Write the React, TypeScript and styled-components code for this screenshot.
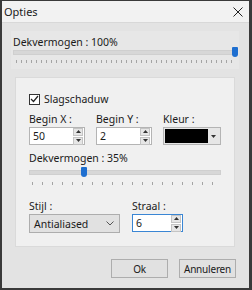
import { FC } from 'react';
import styled, { createGlobalStyle } from 'styled-components';

const GlobalStyle = createGlobalStyle`
  html, body {
    margin: 0;
    padding: 0;
    background: #3c3c3c;
  }
  body {
    font-family: "Noto Sans", "Open Sans", sans-serif;
    font-size: 10.5px;
    color: #1a1a1a;
  }
`;

const Frame = styled.div`
  width: 252px;
  height: 290px;
  box-sizing: border-box;
  padding: 1px 3px 2px 2px;
  background: #3a3a3a;
`;

const Window = styled.div`
  height: 100%;
  display: flex;
  flex-direction: column;
  background: #e3e3e3;
`;

const TitleBar = styled.div`
  height: 21px;
  display: flex;
  align-items: center;
  justify-content: space-between;
  padding: 0 6px 0 2px;
  background: #f2f2f2;
  border-bottom: 1px solid #d8d8d8;
  font-size: 11px;
`;

const Body = styled.div`
  flex: 1;
  display: flex;
  flex-direction: column;
  padding: 8px 10px 0 9px;
`;

const TopPanel = styled.div`
  display: flex;
  flex-direction: column;
  padding: 4px 0 0 2px;
  background: #e7e7e7;
`;

const Label = styled.div<{ $top?: number }>`
  line-height: 14px;
  white-space: nowrap;
  margin-top: ${p => p.$top ?? 0}px;
`;

const SliderWrap = styled.div<{ $width: number; $top: number }>`
  position: relative;
  width: ${p => p.$width}px;
  height: 20px;
  margin-top: ${p => p.$top}px;
`;

const Track = styled.div`
  height: 5px;
  box-sizing: border-box;
  margin-top: 1px;
  background: #d7d7d7;
  border: 1px solid #cfcfcf;
`;

const Ticks = styled.div<{ $step: number; $gap: number }>`
  height: 3px;
  margin: ${p => p.$gap}px 3px 0 3px;
  background: repeating-linear-gradient(
    to right,
    #a4a4a4 0,
    #a4a4a4 1px,
    transparent 1px,
    transparent ${p => p.$step}px
  );
`;

const Thumb = styled.div`
  position: absolute;
  top: -2px;
  width: 6px;
  height: 10px;
  background: #1e6fd0;
  border-radius: 1px 1px 3px 3px;
`;

const Group = styled.div`
  margin: 8px 0 0 4px;
  width: 220px;
  height: 170px;
  box-sizing: border-box;
  background: #f0f0f0;
  border: 1px solid #dadada;
  padding: 14px 0 0 13px;
  display: flex;
  flex-direction: column;
`;

const CheckRow = styled.div`
  display: flex;
  align-items: center;
  gap: 4px;
`;

const CheckBox = styled.div`
  width: 9px;
  height: 9px;
  border: 1px solid #333;
  background: #fff;
  display: flex;
  align-items: center;
  justify-content: center;
`;

const FieldRow = styled.div<{ $gap: number; $top: number }>`
  display: flex;
  gap: ${p => p.$gap}px;
  margin-top: ${p => p.$top}px;
`;

const Field = styled.div`
  display: flex;
  flex-direction: column;
  gap: 1px;
`;

const Spin = styled.div<{ $width: number; $focus?: boolean }>`
  width: ${p => p.$width}px;
  height: 18px;
  box-sizing: border-box;
  display: flex;
  align-items: center;
  justify-content: space-between;
  background: #fff;
  border: 1px solid ${p => (p.$focus ? '#3a86d4' : '#b4b4b4')};
  padding-left: 3px;
`;

const SpinButtons = styled.div`
  display: flex;
  flex-direction: column;
  gap: 1px;
  margin-right: 1px;
`;

const SpinBtn = styled.div`
  width: 8px;
  height: 6px;
  background: #e6e6e6;
  border: 1px solid #c4c4c4;
  display: flex;
  align-items: center;
  justify-content: center;
`;

const ColorBox = styled.div`
  width: 58px;
  height: 18px;
  box-sizing: border-box;
  display: flex;
  background: #e6e6e6;
  border: 1px solid #b4b4b4;
  padding: 1px;
`;

const Swatch = styled.div`
  flex: 1;
  background: #000;
`;

const ColorArrow = styled.div`
  width: 11px;
  display: flex;
  align-items: center;
  justify-content: center;
`;

const Select = styled.div`
  width: 91px;
  height: 19px;
  box-sizing: border-box;
  display: flex;
  align-items: center;
  justify-content: space-between;
  background: #e1e1e1;
  border: 1px solid #adadad;
  padding: 0 5px 0 4px;
`;

const Footer = styled.div`
  display: flex;
  justify-content: flex-end;
  gap: 11px;
  margin-top: 12px;
  padding-right: 3px;
`;

const Button = styled.button`
  width: 57px;
  height: 19px;
  padding: 0;
  font: inherit;
  font-size: 10px;
  letter-spacing: -0.2px;
  color: #1a1a1a;
  background: #e1e1e1;
  border: 1px solid #adadad;
`;

const Slider: FC<{ width: number; pos: number; step: number; top: number; tickGap: number }> = ({
  width,
  pos,
  step,
  top,
  tickGap,
}) => (
  <SliderWrap $width={width} $top={top}>
    <Track />
    <Ticks $step={step} $gap={tickGap} />
    <Thumb style={{ left: pos }} />
  </SliderWrap>
);

const Arrow: FC<{ up?: boolean }> = ({ up }) => (
  <svg width="5" height="3" viewBox="0 0 5 3">
    <path d={up ? 'M0 3 L2.5 0 L5 3 Z' : 'M0 0 L2.5 3 L5 0 Z'} fill="#333" />
  </svg>
);

const SpinField: FC<{ width: number; value: string; focus?: boolean }> = ({ width, value, focus }) => (
  <Spin $width={width} $focus={focus}>
    <span>{value}</span>
    <SpinButtons>
      <SpinBtn><Arrow up /></SpinBtn>
      <SpinBtn><Arrow /></SpinBtn>
    </SpinButtons>
  </Spin>
);

const App: FC = () => (
  <>
    <GlobalStyle />
    <Frame>
      <Window>
        <TitleBar>
          <span>Opties</span>
          <svg width="10" height="10" viewBox="0 0 10 10">
            <path d="M0.5 0.5 L9.5 9.5 M9.5 0.5 L0.5 9.5" stroke="#222" strokeWidth="1" />
          </svg>
        </TitleBar>
        <Body>
          <TopPanel>
            <Label>Dekvermogen : 100%</Label>
            <Slider width={225} pos={219} step={5} top={0} tickGap={5} />
          </TopPanel>
          <Group>
            <CheckRow>
              <CheckBox>
                <svg width="9" height="8" viewBox="0 0 9 8">
                  <path d="M1 4 L3.5 6.5 L8 1" stroke="#222" strokeWidth="1.2" fill="none" />
                </svg>
              </CheckBox>
              <Label>Slagschaduw</Label>
            </CheckRow>
            <FieldRow $gap={11} $top={6}>
              <Field>
                <Label>Begin X :</Label>
                <SpinField width={56} value="50" />
              </Field>
              <Field>
                <Label>Begin Y :</Label>
                <SpinField width={56} value="2" />
              </Field>
              <Field>
                <Label>Kleur :</Label>
                <ColorBox>
                  <Swatch />
                  <ColorArrow><Arrow /></ColorArrow>
                </ColorBox>
              </Field>
            </FieldRow>
            <Label $top={6}>Dekvermogen : 35%</Label>
            <Slider width={192} pos={52} step={10} top={4} tickGap={7} />
            <FieldRow $gap={12} $top={10}>
              <Field>
                <Label>Stijl :</Label>
                <Select>
                  <span>Antialiased</span>
                  <svg width="8" height="5" viewBox="0 0 8 5">
                    <path d="M0.5 0.5 L4 4 L7.5 0.5" stroke="#555" fill="none" />
                  </svg>
                </Select>
              </Field>
              <Field>
                <Label>Straal :</Label>
                <SpinField width={51} value="6" focus />
              </Field>
            </FieldRow>
          </Group>
          <Footer>
            <Button>Ok</Button>
            <Button>Annuleren</Button>
          </Footer>
        </Body>
      </Window>
    </Frame>
  </>
);

export default App;
